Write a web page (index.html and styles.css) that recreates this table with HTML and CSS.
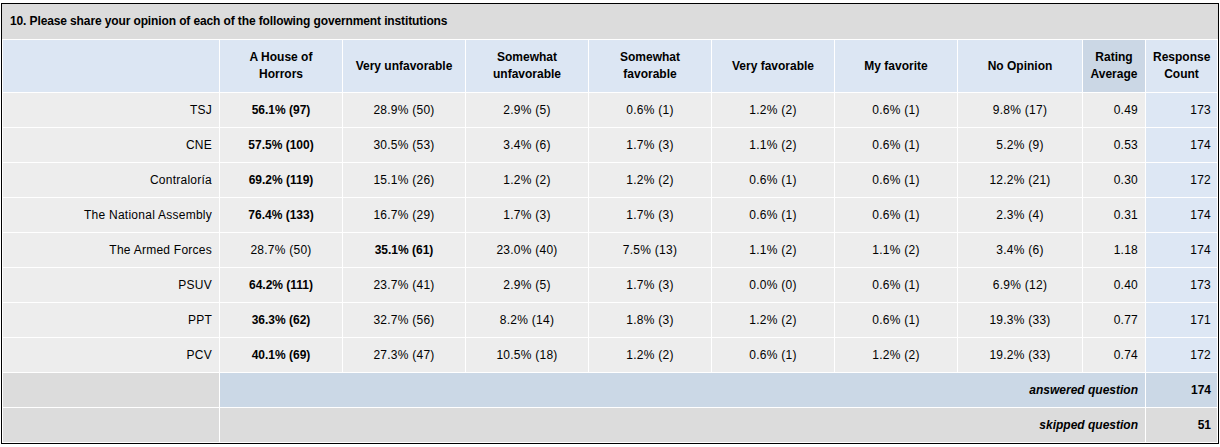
FILE: index.html
```html
<!DOCTYPE html>
<html>
<head>
<meta charset="utf-8">
<link rel="stylesheet" href="styles.css">
</head>
<body>
<div class="survey">
  <div class="qtitle">10. Please share your opinion of each of the following government institutions</div>
  <table class="grid">
    <colgroup>
      <col class="c-label">
      <col class="c-opt"><col class="c-opt"><col class="c-opt"><col class="c-opt"><col class="c-opt"><col class="c-opt">
      <col class="c-opt7">
      <col class="c-avg">
      <col class="c-cnt">
    </colgroup>
    <thead>
      <tr>
        <th class="h"></th>
        <th class="h">A House of<br>Horrors</th>
        <th class="h">Very unfavorable</th>
        <th class="h">Somewhat<br>unfavorable</th>
        <th class="h">Somewhat<br>favorable</th>
        <th class="h">Very favorable</th>
        <th class="h">My favorite</th>
        <th class="h">No Opinion</th>
        <th class="h h-dark">Rating<br>Average</th>
        <th class="h">Response<br>Count</th>
      </tr>
    </thead>
    <tbody>
      <tr><td class="lbl">TSJ</td><td class="v b">56.1% (97)</td><td class="v">28.9% (50)</td><td class="v">2.9% (5)</td><td class="v">0.6% (1)</td><td class="v">1.2% (2)</td><td class="v">0.6% (1)</td><td class="v">9.8% (17)</td><td class="avg">0.49</td><td class="cnt">173</td></tr>
      <tr><td class="lbl">CNE</td><td class="v b">57.5% (100)</td><td class="v">30.5% (53)</td><td class="v">3.4% (6)</td><td class="v">1.7% (3)</td><td class="v">1.1% (2)</td><td class="v">0.6% (1)</td><td class="v">5.2% (9)</td><td class="avg">0.53</td><td class="cnt">174</td></tr>
      <tr><td class="lbl">Contraloría</td><td class="v b">69.2% (119)</td><td class="v">15.1% (26)</td><td class="v">1.2% (2)</td><td class="v">1.2% (2)</td><td class="v">0.6% (1)</td><td class="v">0.6% (1)</td><td class="v">12.2% (21)</td><td class="avg">0.30</td><td class="cnt">172</td></tr>
      <tr><td class="lbl">The National Assembly</td><td class="v b">76.4% (133)</td><td class="v">16.7% (29)</td><td class="v">1.7% (3)</td><td class="v">1.7% (3)</td><td class="v">0.6% (1)</td><td class="v">0.6% (1)</td><td class="v">2.3% (4)</td><td class="avg">0.31</td><td class="cnt">174</td></tr>
      <tr><td class="lbl">The Armed Forces</td><td class="v">28.7% (50)</td><td class="v b">35.1% (61)</td><td class="v">23.0% (40)</td><td class="v">7.5% (13)</td><td class="v">1.1% (2)</td><td class="v">1.1% (2)</td><td class="v">3.4% (6)</td><td class="avg">1.18</td><td class="cnt">174</td></tr>
      <tr><td class="lbl">PSUV</td><td class="v b">64.2% (111)</td><td class="v">23.7% (41)</td><td class="v">2.9% (5)</td><td class="v">1.7% (3)</td><td class="v">0.0% (0)</td><td class="v">0.6% (1)</td><td class="v">6.9% (12)</td><td class="avg">0.40</td><td class="cnt">173</td></tr>
      <tr><td class="lbl">PPT</td><td class="v b">36.3% (62)</td><td class="v">32.7% (56)</td><td class="v">8.2% (14)</td><td class="v">1.8% (3)</td><td class="v">1.2% (2)</td><td class="v">0.6% (1)</td><td class="v">19.3% (33)</td><td class="avg">0.77</td><td class="cnt">171</td></tr>
      <tr><td class="lbl">PCV</td><td class="v b">40.1% (69)</td><td class="v">27.3% (47)</td><td class="v">10.5% (18)</td><td class="v">1.2% (2)</td><td class="v">0.6% (1)</td><td class="v">1.2% (2)</td><td class="v">19.2% (33)</td><td class="avg">0.74</td><td class="cnt">172</td></tr>
    </tbody>
    <tfoot>
      <tr class="answered"><td class="blank"></td><td class="sumlbl" colspan="8">answered question</td><td class="sumval">174</td></tr>
      <tr class="skipped"><td class="blank"></td><td class="sumlbl" colspan="8">skipped question</td><td class="sumval">51</td></tr>
    </tfoot>
  </table>
</div>
</body>
</html>
```

FILE: styles.css
```css
html, body {
  margin: 0;
  padding: 0;
  background: #ffffff;
}

body {
  font-family: "Liberation Sans", Arial, sans-serif;
  font-size: 12px;
  color: #000;
}

.survey {
  margin: 3px 0 0 1px;
  width: 1216px;
  border: 1px solid #000;
  background: #ffffff;
}

.qtitle {
  height: 35px;
  line-height: 34px;
  padding-left: 8px;
  background: #dcdcdc;
  font-weight: bold;
  font-size: 12px;
  letter-spacing: -0.12px;
  box-sizing: border-box;
}

.grid {
  width: 1216px;
  table-layout: fixed;
  border-collapse: separate;
  border-spacing: 1px;
  background: #ffffff;
}

.c-label { width: 216px; }
.c-opt { width: 122px; }
.c-opt7 { width: 124px; }
.c-avg { width: 62px; }
.c-cnt { width: 71px; }

.grid th,
.grid td {
  padding: 0 7px;
  font-size: 12px;
  box-sizing: border-box;
}

.h {
  height: 52px;
  background: #dce6f3;
  font-weight: bold;
  text-align: center;
  line-height: 17px;
}

.h-dark {
  background: #cbd7e5;
}

.grid tbody td {
  height: 34px;
  background: #ededed;
  letter-spacing: 0.25px;
}

.grid tbody td.b {
  letter-spacing: 0;
}

.lbl {
  text-align: right;
}

.v {
  text-align: center;
}

.b {
  font-weight: bold;
}

.avg {
  text-align: right;
}

.grid tbody td.cnt {
  text-align: right;
  padding-right: 6px;
  background: #dde7f4;
}

.grid tfoot td {
  height: 34px;
}

.blank {
  background: #dcdcdc;
}

.sumlbl {
  text-align: right;
  font-weight: bold;
  font-style: italic;
}

.sumval {
  text-align: right;
  font-weight: bold;
}

.grid tfoot td.sumval {
  padding-right: 6px;
}

.answered .sumlbl,
.answered .sumval {
  background: #cbd8e6;
}

.skipped .sumlbl,
.skipped .sumval {
  background: #dcdcdc;
}
```
